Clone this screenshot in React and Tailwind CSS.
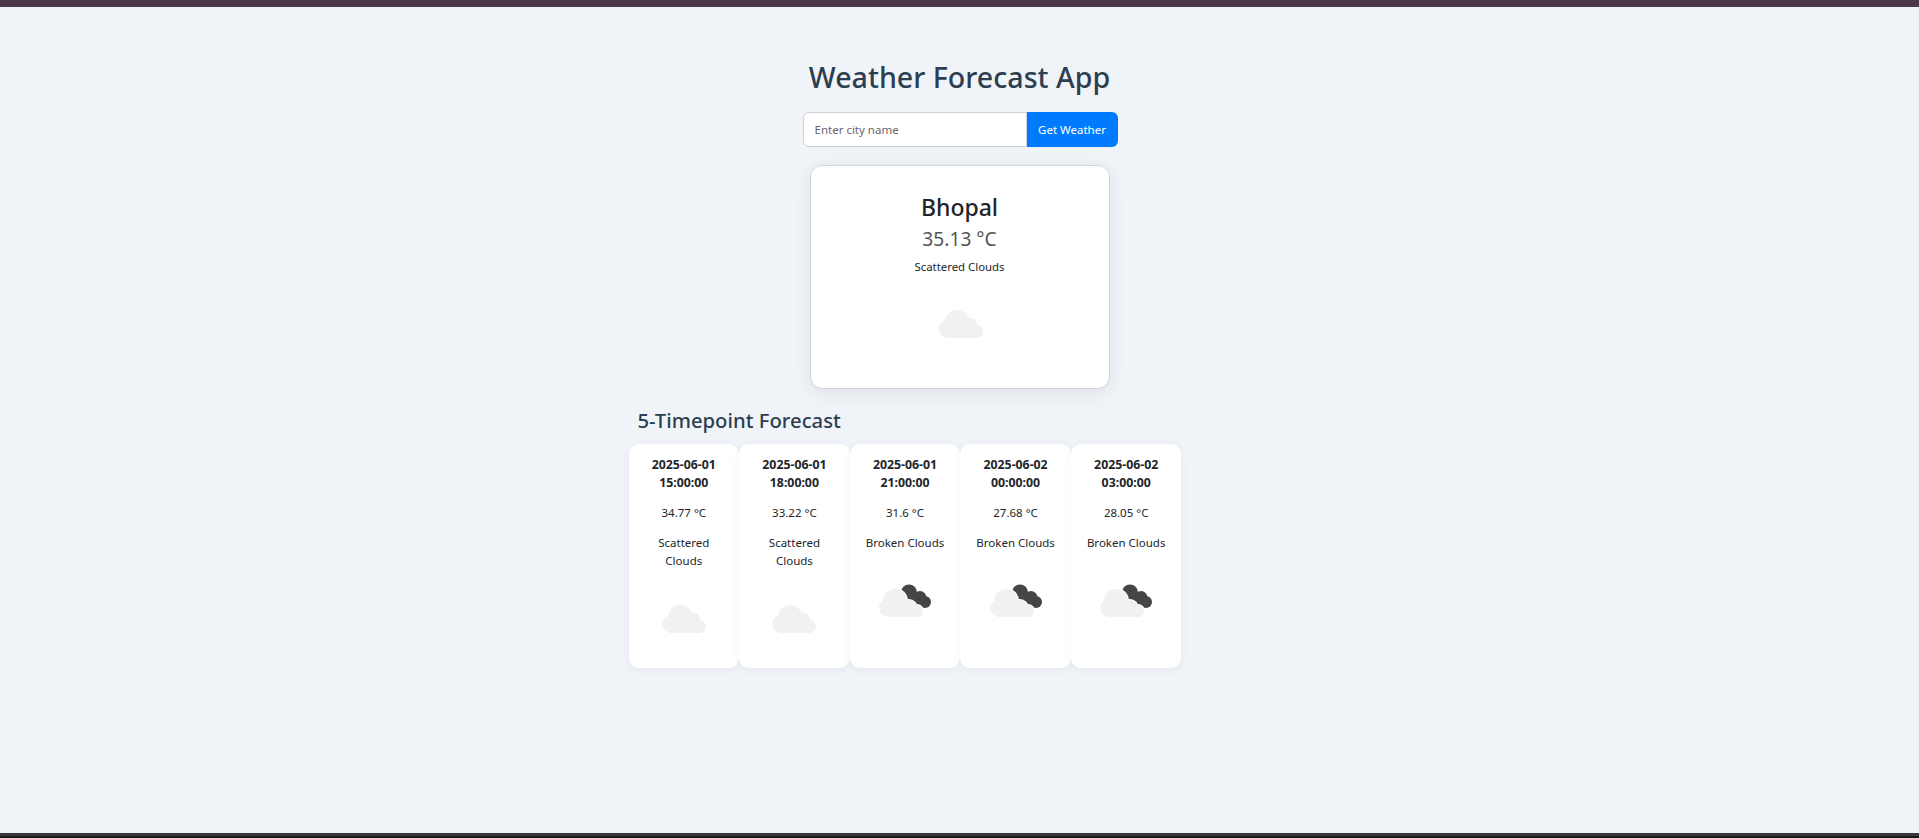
import React from 'react';

const forecast = [
  { date: '2025-06-01', time: '15:00:00', temp: '34.77 °C', desc: 'Scattered Clouds', broken: false },
  { date: '2025-06-01', time: '18:00:00', temp: '33.22 °C', desc: 'Scattered Clouds', broken: false },
  { date: '2025-06-01', time: '21:00:00', temp: '31.6 °C', desc: 'Broken Clouds', broken: true },
  { date: '2025-06-02', time: '00:00:00', temp: '27.68 °C', desc: 'Broken Clouds', broken: true },
  { date: '2025-06-02', time: '03:00:00', temp: '28.05 °C', desc: 'Broken Clouds', broken: true },
];

function Puffs(props) {
  return (
    <g {...props}>
      <circle cx="9" cy="19" r="9" />
      <circle cx="18" cy="12" r="12" />
      <circle cx="31" cy="14.5" r="7" />
      <circle cx="37.5" cy="21.5" r="6.5" />
      <rect x="9" y="16" width="28" height="12" />
    </g>
  );
}

// the front cloud of the broken icon sits lower on its right side
function FrontPuffs(props) {
  return (
    <g {...props}>
      <circle cx="9" cy="19" r="9" />
      <circle cx="16" cy="12" r="12" />
      <circle cx="30" cy="19" r="8" />
      <circle cx="38" cy="22" r="6" />
      <rect x="9" y="18" width="29" height="10" />
    </g>
  );
}

function CloudIcon({ broken, x = 28, y = 26 }) {
  return (
    <svg viewBox="0 0 100 80" className="block w-[100px] h-20 mx-auto">
      {broken ? (
        <g transform="translate(24 28)">
          <g fill="#454545">
            <circle cx="30" cy="3.5" r="8" />
            <circle cx="41" cy="8.5" r="6.5" />
            <circle cx="46" cy="13" r="6" />
            <path d="M24 6 L32 0 L48 9 L44 19 L34 16 Z" />
          </g>
          <FrontPuffs fill="#ffffff" stroke="#ffffff" strokeWidth="2" />
          <FrontPuffs fill="#f1f1ef" />
        </g>
      ) : (
        <g transform={`translate(${x} ${y})`}>
          <Puffs fill="#f1f1ef" />
        </g>
      )}
    </svg>
  );
}

export default function App() {
  return (
    <div className="flex flex-col h-[838px] overflow-hidden bg-[#f0f4f8] font-['Noto_Sans','Open_Sans',sans-serif]">
      <div className="h-[7px] bg-[#4b3849]" />

      <main className="flex-1 flex flex-col items-center">
        <h1 className="mt-[47px] text-[28.6px] leading-[46px] font-medium text-[#2c3e50]">Weather Forecast App</h1>

        <div className="flex mt-[12px] ml-px">
          <input
            placeholder="Enter city name"
            className="w-[224px] h-[35px] pl-[11px] bg-white border border-[#ccd0da] rounded-l-[6px] text-[11.5px] placeholder:text-[#6b6670] outline-none"
          />
          <button className="w-[91px] h-[35px] bg-[#007bff] text-white text-[11.5px] rounded-r-[6px]">Get Weather</button>
        </div>

        <div className="w-[300px] h-[224px] mt-[18px] pt-[24px] bg-white border border-[#d2d4d8] rounded-[12px] shadow-[0_4px_20px_rgba(0,0,0,0.08)] text-center">
          <h2 className="text-[23px] leading-[34px] font-medium text-[#212529]">Bhopal</h2>
          <div className="mt-px text-[19.2px] leading-[28px] text-[#555555]">35.13 °C</div>
          <p className="mt-[5px] text-[11.4px] leading-[18px] text-[#212529]">Scattered Clouds</p>
          <div className="mt-[9px]">
            <CloudIcon x={29} y={25} />
          </div>
        </div>

        <div className="w-[662px] mt-[16px]">
          <h3 className="ml-[9px] text-[20.3px] leading-[30px] font-medium text-[#2c3e50]">5-Timepoint Forecast</h3>
          <div className="flex mt-[9px]">
            {forecast.map((item) => (
              <div
                key={item.time}
                className="w-[110.6px] h-[224px] pt-[12px] bg-white rounded-[10px] shadow-[0_2px_10px_rgba(0,0,0,0.05)] text-center text-[11.5px] leading-[18px] text-[#212529]"
              >
                <div className="text-[12.3px] font-bold">
                  {item.date}
                  <br />
                  {item.time}
                </div>
                <p className="mt-[12px]">{item.temp}</p>
                <p className="mt-[12px] px-[10px]">{item.desc}</p>
                <div className="mt-[9px]">
                  <CloudIcon broken={item.broken} />
                </div>
              </div>
            ))}
          </div>
        </div>
      </main>

      <div className="h-[3px] bg-[#37373a]" />
      <div className="h-[2px] bg-[#1a1a1a]" />
    </div>
  );
}
